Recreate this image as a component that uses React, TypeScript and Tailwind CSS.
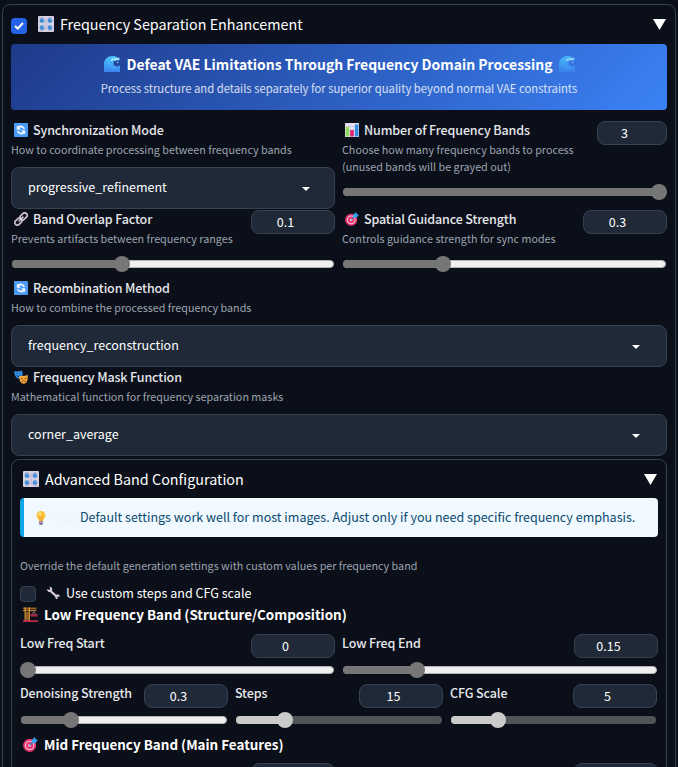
import type { ReactNode } from "react";

function Knobs({ size = 16 }: { size?: number }) {
  return (
    <svg width={size} height={size} viewBox="0 0 16 16" className="shrink-0">
      <rect width="16" height="16" rx="1" fill="#d9d0e6" />
      <path d="M2 1.5h4M10 1.5h4M2 14.6h4M10 14.6h4M8 2v12" stroke="#b9abc9" strokeWidth=".8" />
      {[[4, 4.6], [12, 4.6], [4, 11.6], [12, 11.6]].map(([x, y]) => (
        <g key={`${x}-${y}`}>
          <circle cx={x} cy={y} r="2.6" fill="#8fb3dc" />
          <circle cx={x} cy={y} r="2" fill="#2f83cf" />
          <path d={`M${x} ${y}l1.4-1.4`} stroke="#d7ecff" strokeWidth=".8" />
        </g>
      ))}
    </svg>
  );
}

function Wave() {
  return (
    <svg width="16" height="16" viewBox="0 0 16 16" className="shrink-0">
      <defs>
        <linearGradient id="wave" x1="0" y1="0" x2="0" y2="1">
          <stop offset="0" stopColor="#4cc8ff" />
          <stop offset="1" stopColor="#3b82f0" />
        </linearGradient>
      </defs>
      <path d="M0 16V8C0 3 4 0 8.5 0C12 0 14.5 1.5 16 4.2C12.5 4 9.8 4 9.5 7C9.3 9.2 11 10.3 13 10.3C14.5 10.3 15.5 9.8 16 9.3V16Z" fill="url(#wave)" />
      <path d="M6.5 5Q7 2.3 9.5 2.2H14L15.2 4.5L12.8 4L11.5 4.7L10 3.8L8 5Z" fill="#a9e8ff" />
      <circle cx="14.8" cy="2.4" r=".8" fill="#a8e8ff" />
      <circle cx="13.5" cy="6.5" r=".7" fill="#a8e8ff" />
      <path d="M5 6C4.5 10 7 12.3 12 12" stroke="#4fbfff" strokeWidth=".8" fill="none" />
    </svg>
  );
}

function Cycle() {
  return (
    <svg width="14" height="14" viewBox="0 0 14 14" className="shrink-0">
      <rect width="14" height="14" rx="1" fill="#4a9bf5" />
      <path d="M4.2 4.5C6 2.8 9.3 3.2 10.3 6M9.8 9.5C8 11.2 4.7 10.8 3.7 8" stroke="#eef5ff" strokeWidth="1.8" fill="none" />
      <path d="M2.8 2.5V6.7H7ZM11.2 11.5V7.3H7Z" fill="#eef5ff" />
    </svg>
  );
}

function Chart() {
  return (
    <svg width="14" height="14" viewBox="0 0 14 14" className="shrink-0">
      <rect width="14" height="14" rx=".6" fill="#e4dff0" />
      <path d="M0 3.5h14M0 7h14M0 10.5h14" stroke="#c3bbd3" strokeWidth=".5" />
      <rect x=".7" y="4" width="3.5" height="9.5" fill="#8fdc5b" />
      <rect x="5.2" y="7" width="3.6" height="6.5" fill="#e0246e" />
      <rect x="9.9" y="1.5" width="3.5" height="12" fill="#2f8ee0" />
    </svg>
  );
}

function Link() {
  return (
    <svg width="14" height="14" viewBox="0 0 14 14" className="shrink-0" fill="none" strokeLinecap="round">
      <g transform="rotate(-45 7 7)" stroke="#c9b9d2" strokeWidth="1.8">
        <rect x="-.7" y="4.5" width="8" height="5" rx="2.5" />
        <rect x="6.7" y="4.5" width="8" height="5" rx="2.5" />
      </g>
      <path d="M5 9L9 5" stroke="#eee1f0" strokeWidth="1.3" />
    </svg>
  );
}

function Target({ size = 14 }: { size?: number }) {
  return (
    <svg width={size} height={size} viewBox="0 0 14 14" className="shrink-0">
      <circle cx="6.2" cy="7.8" r="6.1" fill="#e5336f" />
      <circle cx="6.2" cy="7.8" r="4.4" fill="#f1c5d8" />
      <circle cx="6.2" cy="7.8" r="3.4" fill="#e5336f" />
      <circle cx="6.2" cy="7.8" r="1.4" fill="#f4c4d6" />
      <path d="M6.2 7.8L10.5 3.5" stroke="#2674b8" strokeWidth="1" />
      <path d="M8.2 5.8V2.7L11.2 0L11.7 2.2L14 2.8L11.3 5.8Z" fill="#35a5ee" />
    </svg>
  );
}

function Masks() {
  return (
    <svg width="14" height="14" viewBox="0 0 14 14" className="shrink-0">
      <path d="M.3 1Q4 2.3 8 .4Q9.3 5 7.6 7.5Q5.5 9.5 3 8Q.3 6 .3 1Z" fill="#3697ec" />
      <path d="M2 3.6Q3 2.8 3.7 3.7M5.6 3.4Q6.5 2.5 7.3 3.2M2.7 5.5Q5 6.5 6.8 5Q6 7.4 4.5 7.2Q3.2 7 2.7 5.5Z" fill="#154f8b" stroke="#154f8b" strokeWidth=".6" />
      <path d="M5.3 5.8Q9.5 6.5 13.7 5Q14.3 10 12.3 12.5Q10 14.7 7.5 13Q5 11 5.3 5.8Z" fill="#f6a83a" />
      <path d="M7 8.7L9 9M10.8 8.6L12.6 8M7.9 12Q9.5 9.5 11.7 11.5" fill="none" stroke="#7c3c14" strokeWidth=".9" />
    </svg>
  );
}

function Bulb() {
  return (
    <svg width="14" height="14" viewBox="0 0 14 14" className="shrink-0">
      <path d="M7 0C4.2 0 2.5 2 2.5 4.5C2.5 7 4.8 8 5 10.3H9C9.2 8 11.5 7 11.5 4.5C11.5 2 9.8 0 7 0Z" fill="#fbc33c" />
      <path d="M5.7 5L6.3 10M8.3 5L7.7 10" stroke="#e88f2e" strokeWidth=".6" />
      <ellipse cx="5.8" cy="3" rx="1.5" ry="1.8" fill="#ffe27a" />
      <path d="M5 10.3H9V12.8L8 14H6L5 12.8Z" fill="#8b719f" />
      <path d="M5 11.6H9" stroke="#c7b4d5" strokeWidth=".6" />
    </svg>
  );
}

function Wrench() {
  return (
    <svg width="14" height="14" viewBox="0 0 14 14" className="shrink-0">
      <path d="M3.9 4.5L10.5 10.3" stroke="#d5c7de" strokeWidth="2.3" />
      <path d="M1 2.9L3 4L4.3 2.8L3.5 .8C5.5 .7 6.7 2.2 6.2 4.3L4.5 6C2.5 6.3 1 5 1 2.9Z" fill="#d5c7de" />
      <path d="M9 10.4L11 8.2C13 8.2 14 9.5 13.6 11L12 10.5L11.2 11.5L12 13C10.5 13.3 9 12.2 9 10.4Z" fill="#d5c7de" />
    </svg>
  );
}

function Crane() {
  return (
    <svg width="15" height="15" viewBox="0 0 15 15" className="shrink-0">
      <path d="M0 1.2H13.5M0 3.6H13.5" stroke="#d58a2c" strokeWidth="1" />
      <path d="M1 3.3L3 1.7L5 3.3L7 1.7L9 3.3L11 1.7L13 3.3" stroke="#a86423" strokeWidth=".7" fill="none" />
      <path d="M2.2 .3V14M6.3 .3V14" stroke="#e0a13a" strokeWidth="1.2" />
      <path d="M2.2 5L6.3 7L2.2 9L6.3 11L2.2 13M6.3 5L2.2 7L6.3 9L2.2 11L6.3 13" stroke="#b5702c" strokeWidth=".9" fill="none" />
      <path d="M10.8 3.5V6M8.5 7.5L10.8 5L13.2 7.5" stroke="#b8a0b8" strokeWidth=".6" fill="none" />
      <rect x="7.5" y="6.8" width="7" height="2.8" fill="#9c2b43" />
      <rect x="0" y="13.4" width="15" height="1.4" fill="#e63254" />
    </svg>
  );
}

function NumberBox({ value, width = "w-[84px]" }: { value?: string; width?: string }) {
  return (
    <div className={`flex h-6 shrink-0 items-center justify-center rounded-lg border border-[#374151] bg-[#1f2937] pr-[15px] text-[12.5px] leading-6 text-white ${width}`}>
      {value}
    </div>
  );
}

function Slider({ at, muted = false }: { at: number; muted?: boolean }) {
  return (
    <div className="relative flex h-4 w-full items-center px-px">
      <div className={`h-2 w-full overflow-hidden rounded-full ${muted ? "bg-[#515359]" : "border border-[#b2b2b2] bg-[#efefef]"}`}>
        <div className={`h-2 ${muted ? "bg-[#cbcbcb]" : "-m-px bg-[#767676]"}`} style={{ width: at }} />
      </div>
      {!muted && <div className="absolute left-px top-1 h-2 rounded-l-full bg-[#767676]" style={{ width: at }} />}
      <div className={`absolute top-0 size-4 rounded-full ${muted ? "bg-[#cbcbcb]" : "bg-[#767676]"}`} style={{ left: at - 8 }} />
    </div>
  );
}

function Label({ icon, children }: { icon?: ReactNode; children: ReactNode }) {
  return (
    <div className={`flex h-[20px] items-center gap-[5px] whitespace-nowrap text-[12.5px] font-medium leading-5 tracking-[-0.13px] text-[#e5e7eb] ${icon ? "pl-[3px]" : ""}`}>
      {icon}
      <span>{children}</span>
    </div>
  );
}

function Info({ children }: { children: ReactNode }) {
  return <div className="whitespace-nowrap text-[10.75px] leading-[17px] text-[#9ca3af]">{children}</div>;
}

function Select({ value, wide = false }: { value: string; wide?: boolean }) {
  return (
    <div className={`flex h-[42px] items-center justify-between rounded-lg border border-[#374151] bg-[#1f2937] pl-4 text-[12.5px] text-white ${wide ? "pr-[26px]" : "pr-6"}`}>
      <span className="pb-[2px]">{value}</span>
      <svg width="8" height="4" viewBox="0 0 8 4" className="mt-[2px]"><path d="M0 0H8L4 4Z" fill="#fff" /></svg>
    </div>
  );
}

function Triangle() {
  return <svg width="13" height="11" viewBox="0 0 13 11"><path d="M0 0H13L6.5 11Z" fill="#fff" /></svg>;
}

function CompactField({ label, value, at, muted, width }: { label: string; value: string; at: number; muted?: boolean; width: string }) {
  return (
    <div className={`shrink-0 ${width}`}>
      <div className="flex justify-between">
        <div className="-mt-px"><Label>{label}</Label></div>
        <NumberBox value={value} />
      </div>
      <div className="pt-1"><Slider at={at} muted={muted} /></div>
    </div>
  );
}

export default function App() {
  return (
    <div className="h-[767px] w-[678px] overflow-hidden bg-[#0b0f19] pl-[2px] pr-[2px] pt-1 font-['Noto_Sans_CJK_SC',sans-serif] text-white">
      <main className="h-[800px] rounded-lg border border-[#374151] px-2">
        <header className="flex h-[39px] items-center">
          <div className="mt-[3px] flex size-4 items-center justify-center rounded-[4px] bg-[#2563eb]">
            <svg width="10" height="8" viewBox="0 0 10 8"><path d="M1 4L3.8 6.5L9 1" fill="none" stroke="white" strokeWidth="2" /></svg>
          </div>
          <div className="ml-[11px] pb-px"><Knobs /></div>
          <h1 className="ml-[6px] flex-1 pb-[2px] text-[14.35px] leading-6">Frequency Separation Enhancement</h1>
          <div className="pb-px pr-px"><Triangle /></div>
        </header>

        <section className="flex h-[66px] flex-col items-center rounded-[4px] bg-linear-135 from-[#1e3a8a] to-[#3b82f6] pt-2">
          <h2 className="flex h-6 items-center gap-[7px] text-[13.95px] font-bold leading-6">
            <Wave /><span>Defeat VAE Limitations Through Frequency Domain Processing</span><span className="-ml-px opacity-80"><Wave /></span>
          </h2>
          <p className="text-[11.28px] leading-6 text-white/80">Process structure and details separately for superior quality beyond normal VAE constraints</p>
        </section>

        <section className="flex h-[100px] gap-[7px] pt-[10px]">
          <div className="w-[324px]">
            <Label icon={<Cycle />}>Synchronization Mode</Label>
            <div className="h-[27px] pt-[1px]"><Info>How to coordinate processing between frequency bands</Info></div>
            <Select value="progressive_refinement" />
          </div>
          <div className="w-[325px]">
            <div className="flex h-[64px] justify-between">
              <div>
                <Label icon={<Chart />}>Number of Frequency Bands</Label>
                <div className="pt-[1px]"><Info>Choose how many frequency bands to process</Info><Info>(unused bands will be grayed out)</Info></div>
              </div>
              <div className="pt-px"><NumberBox value="3" width="w-[70px]" /></div>
            </div>
            <Slider at={317} />
          </div>
        </section>

        <section className="flex h-[68px] gap-[7px]">
          <div className="w-[324px]">
            <div className="flex h-[46px] justify-between">
              <div className="-mt-px"><Label icon={<Link />}>Band Overlap Factor</Label><div className="pt-[1px]"><Info>Prevents artifacts between frequency ranges</Info></div></div>
              <NumberBox value="0.1" />
            </div>
            <Slider at={111} />
          </div>
          <div className="w-[325px]">
            <div className="flex h-[46px] justify-between">
              <div className="-mt-px"><Label icon={<Target />}>Spatial Guidance Strength</Label><div className="pt-[1px]"><Info>Controls guidance strength for sync modes</Info></div></div>
              <NumberBox value="0.3" />
            </div>
            <Slider at={101} />
          </div>
        </section>

        <section className="h-[89px]">
          <Label icon={<Cycle />}>Recombination Method</Label>
          <div className="h-[27px] pt-[1px]"><Info>How to combine the processed frequency bands</Info></div>
          <Select value="frequency_reconstruction" wide />
        </section>
        <section className="h-[92px]">
          <Label icon={<Masks />}>Frequency Mask Function</Label>
          <div className="h-[27px] pt-[1px]"><Info>Mathematical function for frequency separation masks</Info></div>
          <Select value="corner_average" wide />
        </section>

        <section className="h-[340px] rounded-lg border border-[#374151] px-2">
          <header className="flex h-[38px] items-center pl-[3px]">
            <Knobs />
            <h2 className="ml-[6px] flex-1 text-[14.35px] leading-6">Advanced Band Configuration</h2>
            <div className="pr-px"><Triangle /></div>
          </header>
          <div className="flex h-[39px] items-center rounded-[4px] border-l-4 border-[#0ea5e9] bg-[#f0f9ff] pl-[10px] text-[12.54px] text-[#0c4a6e]">
            <Bulb /><strong className="ml-[7px] w-[25px] text-[#f3f4f6]">Tip:</strong>
            <span className="whitespace-nowrap">Default settings work well for most images. Adjust only if you need specific frequency emphasis.</span>
          </div>
          <div className="h-[47px] pt-[20px]"><Info>Override the default generation settings with custom values per frequency band</Info></div>
          <div className="flex h-5 items-center">
            <div className="size-4 rounded-[4px] border border-[#374151] bg-[#1f2937]" />
            <div className="ml-[10px] flex items-center gap-[6px] pb-[2px] text-[12.54px] leading-5"><Wrench /><span>Use custom steps and CFG scale</span></div>
          </div>
          <h3 className="flex h-6 items-center gap-[6px] pb-1 pl-[3px] text-[13.43px] font-bold leading-5"><Crane />Low Frequency Band (Structure/Composition)</h3>
          <div className="flex h-[50px] gap-[7px] pt-[6px]">
            <CompactField label="Low Freq Start" value="0" at={8} width="w-[315px]" />
            <CompactField label="Low Freq End" value="0.15" at={75} width="w-[316px]" />
          </div>
          <div className="flex h-[50px] gap-[7px] pt-[6px]">
            <CompactField label="Denoising Strength" value="0.3" at={51} width="w-[208px]" />
            <CompactField label="Steps" value="15" at={50} muted width="w-[208px]" />
            <CompactField label="CFG Scale" value="5" at={48} muted width="w-[207px]" />
          </div>
          <h3 className="mt-[5px] flex h-6 items-center gap-[6px] pb-[2px] pl-[3px] text-[13.43px] font-bold leading-[22px]"><Target size={15} />Mid Frequency Band (Main Features)</h3>
          <div className="flex gap-[7px] pt-[6px]">
            <div className="flex w-[315px] justify-end"><NumberBox /></div>
            <div className="flex w-[316px] justify-end"><NumberBox /></div>
          </div>
        </section>
      </main>
    </div>
  );
}
